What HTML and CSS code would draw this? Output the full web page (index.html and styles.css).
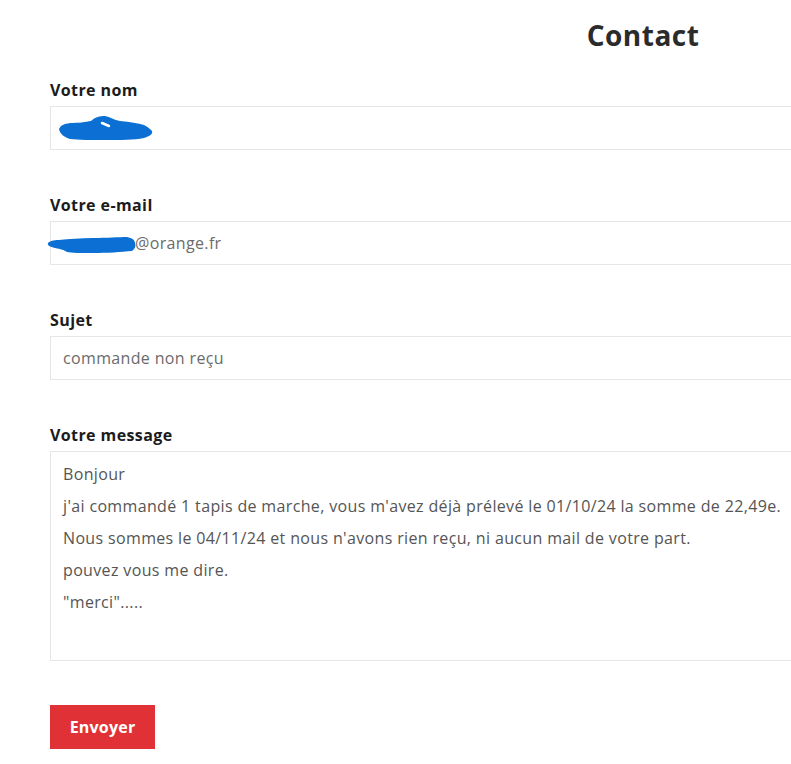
FILE: index.html
```html
<!DOCTYPE html>
<html lang="fr">
<head>
<meta charset="utf-8">
<title>Contact</title>
<link rel="stylesheet" href="styles.css">
</head>
<body>
<div class="page">
	<h1 class="title">Contact</h1>
	<form class="form" action="javascript:;">
		<div class="group">
			<label class="label">Votre nom</label>
			<div class="field">
				<svg class="blob blob-name" width="96" height="27" viewBox="0 0 96 27"><path d="M1 14 C3 10 6 9 12 8 C20 8 28 7 33 6 C37 2 42 1 47 1 C52 2 56 5 62 6 C72 7 80 8 86 10 C90 12 92 14 94 16 C95 19 92 21 86 23 C76 25 62 25 48 25 C34 25 20 25 12 24 C6 22 2 19 1 14 Z" fill="#0b6fd3"/><path d="M44 8 L51 11" stroke="#fff" stroke-width="2.5" stroke-linecap="round"/></svg>
			</div>
		</div>
		<div class="group">
			<label class="label">Votre e-mail</label>
			<div class="field">
				<svg class="blob blob-mail" width="90" height="18" viewBox="0 0 90 18"><path d="M1 7 C3 5 6 4 12 4 C22 3 34 2 46 2 C60 2 72 1 80 1 C85 2 88 4 88 7 C89 10 88 13 85 15 C74 16 60 17 46 17 C34 17 24 17 20 16 C17 14 14 13 8 12 C3 11 0 9 1 7 Z" fill="#0b6fd3"/></svg>
				<span class="value">@orange.fr</span>
			</div>
		</div>
		<div class="group">
			<label class="label">Sujet</label>
			<div class="field"><span class="value">commande non reçu</span></div>
		</div>
		<div class="group">
			<label class="label">Votre message</label>
			<div class="field area">
				<p>Bonjour</p>
				<p>j'ai commandé 1 tapis de marche, vous m'avez déjà prélevé le 01/10/24 la somme de 22,49e.</p>
				<p>Nous sommes le 04/11/24 et nous n'avons rien reçu, ni aucun mail de votre part.</p>
				<p>pouvez vous me dire.</p>
				<p>"merci".....</p>
			</div>
		</div>
		<button class="send" type="submit">Envoyer</button>
	</form>
</div>
</body>
</html>
```

FILE: styles.css
```css
html,body{ margin:0; padding:0; overflow:hidden; background:#fff;}
body{ font-family:"Open Sans","Liberation Sans",sans-serif; color:#1c1c1c;}
.page{ width:1186px; padding:15px 0 0 50px;}
.title{ margin:0; text-align:center; font-size:28px; line-height:40px; font-weight:700; color:#2b2b2b; letter-spacing:0.5px;}
.form{ margin-top:24px;}
.group{ margin-bottom:44px;}
.label{ display:block; font-size:16px; line-height:22px; font-weight:700; color:#1c1c1c; margin-bottom:5px; letter-spacing:0.4px;}
.field{ display:flex; align-items:center; height:44px; box-sizing:border-box; border:1px solid #e6e6e6; padding:0 12px; font-size:16px; color:#6b6b6b; letter-spacing:0.35px;}
.value{ white-space:nowrap;}
.blob{ display:block; flex:none;}
.blob-name{ margin-left:-5px;}
.blob-mail{ margin-left:-16px; margin-right:-2px; margin-top:4px;}
.area{ display:block; height:210px; padding:6px 12px; line-height:32px; color:#555;}
.area p{ margin:0; white-space:nowrap;}
.send{ display:block; width:105px; height:44px; border:none; background:#e03236; color:#fff; font-family:inherit; font-size:16px; font-weight:700; letter-spacing:0.2px; cursor:pointer; padding:0;}
```
